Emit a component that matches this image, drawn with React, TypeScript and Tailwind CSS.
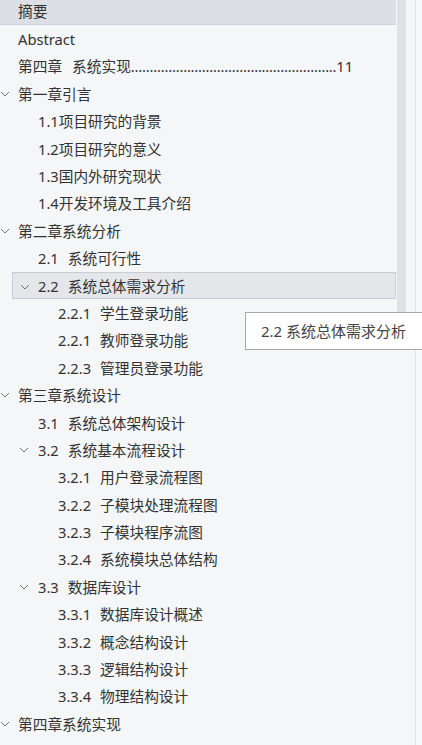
import React from 'react';

type Row = {
  level: number;
  num?: string;
  title: string;
  expanded?: boolean;
  selected?: boolean;
  hovered?: boolean;
  leader?: string;
};

const rows: Row[] = [
  { level: 0, title: '摘要', selected: true },
  { level: 0, title: 'Abstract' },
  { level: 0, num: '第四章', title: '系统实现', leader: '11' },
  { level: 0, title: '第一章引言', expanded: true },
  { level: 1, title: '1.1项目研究的背景' },
  { level: 1, title: '1.2项目研究的意义' },
  { level: 1, title: '1.3国内外研究现状' },
  { level: 1, title: '1.4开发环境及工具介绍' },
  { level: 0, title: '第二章系统分析', expanded: true },
  { level: 1, num: '2.1', title: '系统可行性' },
  { level: 1, num: '2.2', title: '系统总体需求分析', expanded: true, hovered: true },
  { level: 2, num: '2.2.1', title: '学生登录功能' },
  { level: 2, num: '2.2.1', title: '教师登录功能' },
  { level: 2, num: '2.2.3', title: '管理员登录功能' },
  { level: 0, title: '第三章系统设计', expanded: true },
  { level: 1, num: '3.1', title: '系统总体架构设计' },
  { level: 1, num: '3.2', title: '系统基本流程设计', expanded: true },
  { level: 2, num: '3.2.1', title: '用户登录流程图' },
  { level: 2, num: '3.2.2', title: '子模块处理流程图' },
  { level: 2, num: '3.2.3', title: '子模块程序流图' },
  { level: 2, num: '3.2.4', title: '系统模块总体结构' },
  { level: 1, num: '3.3', title: '数据库设计', expanded: true },
  { level: 2, num: '3.3.1', title: '数据库设计概述' },
  { level: 2, num: '3.3.2', title: '概念结构设计' },
  { level: 2, num: '3.3.3', title: '逻辑结构设计' },
  { level: 2, num: '3.3.4', title: '物理结构设计' },
  { level: 0, title: '第四章系统实现', expanded: true },
];

const Chevron = () => (
  <svg width="10" height="6" viewBox="0 0 10 6" className="shrink-0">
    <polyline points="1,1 5,5 9,1" fill="none" stroke="#666" strokeWidth="0.9" />
  </svg>
);

const indents = ['pl-[18px]', 'pl-[38px]', 'pl-[58px]'];
const chevronPos = ['left-[0px]', 'left-[19px]', 'left-[39px]'];

function OutlineRow({ row }: { row: Row }) {
  let bg = '';
  if (row.selected) bg = 'bg-[#dcdfe5] border-b border-[#cdd1d8]';
  if (row.hovered) bg = 'bg-[#e4e6ea] border border-[#c9cdd3] ml-[12px]';
  return (
    <div className={`relative h-[27.4px] flex items-center shrink-0 ${bg}`}>
      {row.expanded && (
        <span className={`absolute top-[11px] ${row.hovered ? 'left-[7px]' : chevronPos[row.level]}`}>
          <Chevron />
        </span>
      )}
      <div className={`flex items-center whitespace-nowrap text-[14.7px] text-[#333] ${row.hovered ? 'pl-[25px]' : indents[row.level]}`}>
        {row.leader ? (
          <>
            <span>{row.num}</span>
            <span className="ml-[10px]">{row.title}</span>
            <span className="tracking-[-0.2px]">{'.'.repeat(55)}</span>
            <span>{row.leader}</span>
          </>
        ) : (
          <>
            {row.num && <span>{row.num}</span>}
            <span className={row.num ? 'ml-[9px]' : ''}>{row.title}</span>
          </>
        )}
      </div>
    </div>
  );
}

export default function App() {
  return (
    <div
      className="relative w-[422px] h-[745px] overflow-hidden flex bg-[#f5f6f8]"
      style={{ fontFamily: '"Noto Sans", "Noto Sans CJK SC", sans-serif' }}
    >
      <div className="w-[396px] flex flex-col -mt-[2px]">
        {rows.map((r, i) => (
          <OutlineRow key={i} row={r} />
        ))}
      </div>
      <div className="w-[19px] pl-[1px]">
        <div className="w-[9px] h-[325px] rounded-b-full rounded-t-[3px] bg-[#dfe2e5]" />
      </div>
      <div className="flex-1 border-l border-[#e2e4e8] bg-[#f7f8fa]" />

      <div className="absolute left-[245px] top-[312px] w-[200px] h-[38px] bg-white border border-[#a9a9a9] flex items-center pl-[15px] text-[15px] text-[#444] whitespace-nowrap">
        2.2 系统总体需求分析
      </div>
    </div>
  );
}
